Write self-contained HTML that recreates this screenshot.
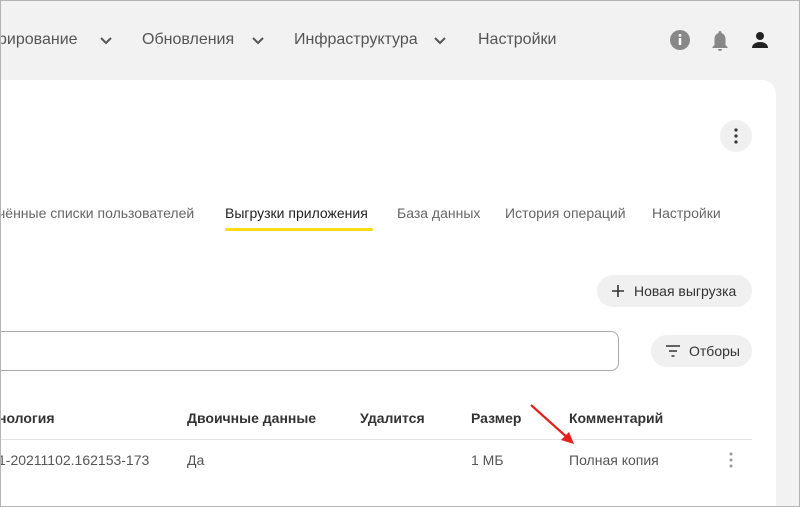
<!DOCTYPE html>
<html style="width:800px;height:507px;overflow:hidden"><head><meta charset="utf-8"><style>
*{margin:0;padding:0;box-sizing:border-box}
body{width:800px;height:507px;overflow:hidden;background:#f2f2f2;font-family:"Liberation Sans",sans-serif;position:relative}
.frame{position:absolute;left:0;top:0;width:800px;height:507px;border:1px solid #b4b4b4;pointer-events:none;z-index:10}
.a{position:absolute;white-space:nowrap}
.nav{font-size:16px;color:#555;top:31px}
.chev{position:absolute;top:35px;width:14px;height:10px}
.card{position:absolute;left:0;top:80px;width:776px;height:427px;background:#fff;border-top-right-radius:14px}
.tab{font-size:14px;color:#666;top:205px}
.th{font-size:14px;color:#333;font-weight:bold;top:410px}
.td{font-size:14px;color:#555;top:452px}
.btn{position:absolute;background:#f0f0f0;border-radius:16px;font-size:14px;color:#333}
</style></head><body>
<div class="a nav" style="left:-2px">рирование</div>
<svg class="chev" style="left:99px" viewBox="0 0 14 10"><path d="M2 3l5 5 5-5" stroke="#555" stroke-width="2" fill="none"/></svg>
<div class="a nav" style="left:142px">Обновления</div>
<svg class="chev" style="left:251px" viewBox="0 0 14 10"><path d="M2 3l5 5 5-5" stroke="#555" stroke-width="2" fill="none"/></svg>
<div class="a nav" style="left:294px">Инфраструктура</div>
<svg class="chev" style="left:433px" viewBox="0 0 14 10"><path d="M2 3l5 5 5-5" stroke="#555" stroke-width="2" fill="none"/></svg>
<div class="a nav" style="left:478px">Настройки</div>
<svg class="a" style="left:669px;top:29px" width="22" height="22" viewBox="0 0 22 22"><circle cx="11" cy="11" r="10" fill="#888"/><rect x="9.8" y="9" width="2.4" height="7" fill="#fff"/><circle cx="11" cy="6.3" r="1.4" fill="#fff"/></svg>
<svg class="a" style="left:710px;top:29px" width="20" height="24" viewBox="0 0 20 24"><path d="M10 2c-1 0-1.5.7-1.5 1.5v.6C5.8 4.9 4.5 7.3 4.5 10v6L2.5 18v1h15v-1l-2-2v-6c0-2.7-1.3-5.1-4-5.9v-.6C11.5 2.7 11 2 10 2z" fill="#888"/><path d="M8 20a2 2 0 0 0 4 0z" fill="#888"/></svg>
<svg class="a" style="left:750px;top:30px" width="20" height="20" viewBox="0 0 20 20"><circle cx="10" cy="6" r="4" fill="#222"/><path d="M2 18c0-4 4-6 8-6s8 2 8 6z" fill="#222"/></svg>
<div class="card"></div>
<div class="a" style="left:720px;top:120px;width:32px;height:32px;border-radius:50%;background:#f0f0f0"></div>
<svg class="a" style="left:734px;top:128px" width="4" height="16"><circle cx="2" cy="2" r="1.6" fill="#333"/><circle cx="2" cy="8" r="1.6" fill="#333"/><circle cx="2" cy="14" r="1.6" fill="#333"/></svg>
<div class="a tab" style="left:-2px">чённые списки пользователей</div>
<div class="a tab" style="left:225px;color:#222">Выгрузки приложения</div>
<div class="a" style="left:225px;top:228px;width:148px;height:3px;background:#fadb14;border-radius:2px"></div>
<div class="a tab" style="left:397px">База данных</div>
<div class="a tab" style="left:505px">История операций</div>
<div class="a tab" style="left:652px">Настройки</div>
<div class="btn" style="left:597px;top:275px;width:155px;height:32px"></div>
<svg class="a" style="left:611px;top:284px" width="14" height="14"><path d="M7 1v12M1 7h12" stroke="#333" stroke-width="1.6"/></svg>
<div class="a" style="left:634px;top:283px;font-size:14px;color:#333">Новая выгрузка</div>
<div class="a" style="left:-10px;top:331px;width:629px;height:40px;border:1px solid #aaa;border-radius:8px"></div>
<div class="btn" style="left:651px;top:335px;width:101px;height:32px"></div>
<svg class="a" style="left:665px;top:344px" width="16" height="14"><path d="M1 2h14M4 7h8M6.5 12h3" stroke="#333" stroke-width="1.6"/></svg>
<div class="a" style="left:689px;top:343px;font-size:14px;color:#333">Отборы</div>
<div class="a th" style="left:-2px">нология</div>
<div class="a th" style="left:187px">Двоичные данные</div>
<div class="a th" style="left:360px">Удалится</div>
<div class="a th" style="left:471px">Размер</div>
<div class="a th" style="left:569px">Комментарий</div>
<div class="a" style="left:0;top:439px;width:752px;height:1px;background:#e4e4e4"></div>
<div class="a td" style="left:-2px">1-20211102.162153-173</div>
<div class="a td" style="left:187px">Да</div>
<div class="a td" style="left:471px">1 МБ</div>
<div class="a td" style="left:569px">Полная копия</div>
<svg class="a" style="left:729px;top:452px" width="4" height="16"><circle cx="2" cy="2" r="1.5" fill="#999"/><circle cx="2" cy="8" r="1.5" fill="#999"/><circle cx="2" cy="14" r="1.5" fill="#999"/></svg>
<svg class="a" style="left:528px;top:402px" width="50" height="45"><path d="M3 3L42 38" stroke="#e8201a" stroke-width="2.2"/><path d="M46 42L33 38L41 30z" fill="#e8201a"/></svg>
<div class="frame"></div>
</body></html>
